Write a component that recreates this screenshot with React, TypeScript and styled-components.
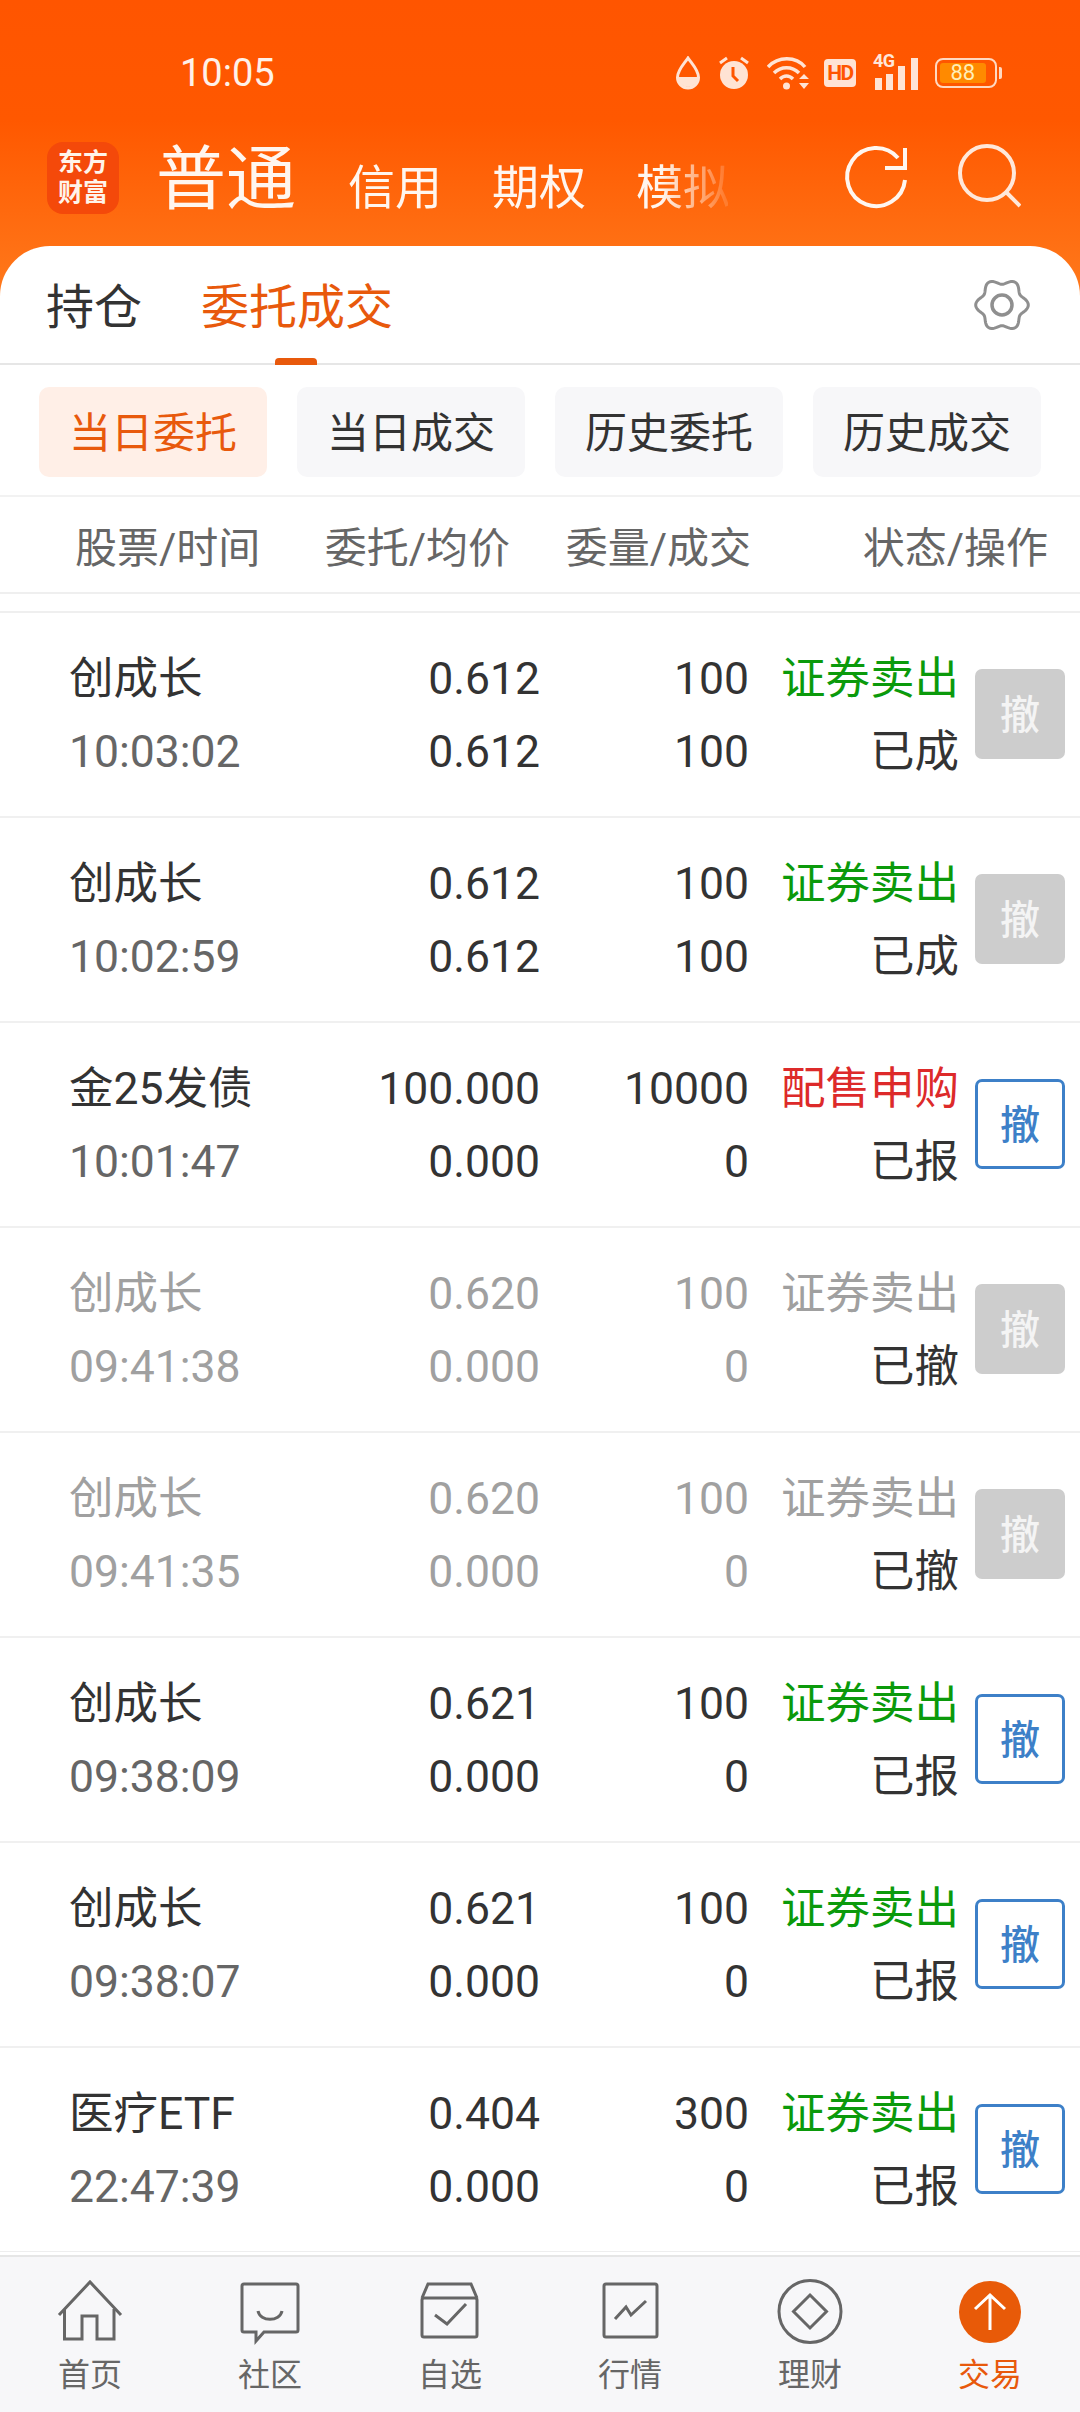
import React from "react";
import styled, { createGlobalStyle } from "styled-components";

const GlobalStyle = createGlobalStyle`
  html, body {
    margin: 0;
    padding: 0;
    background: #fff;
  }
  * {
    box-sizing: border-box;
  }
`;

const Shell = styled.div`
  width: 1080px;
  height: 2412px;
  display: flex;
  flex-direction: column;
  overflow: hidden;
  font-family: Roboto, "Noto Sans CJK SC", sans-serif;
  color: #333;
  background: linear-gradient(#ff5500 0, #ff5800 120px, #ff7a1c 300px) no-repeat;
  background-size: 100% 300px;
`;

/* status bar */
const StatusBar = styled.div`
  height: 130px;
  flex: none;
  padding: 16px 78px 0 180px;
  display: flex;
  align-items: center;
  justify-content: space-between;
  color: #ffe6d9;
`;

const Clock = styled.span`
  font-size: 38px;
  line-height: 1;
  color: #fff1e8;
`;

const StatusIcons = styled.div`
  display: flex;
  align-items: center;
  gap: 17px;
`;

const HdBadge = styled.span`
  width: 32px;
  height: 28px;
  margin-left: -4px;
  border-radius: 4px;
  background: #ffe3d4;
  color: #ff5500;
  font-size: 21px;
  font-weight: 700;
  line-height: 28px;
  text-align: center;
  letter-spacing: -1.5px;
`;

const Signal = styled.div`
  display: flex;
  width: 45px;
  height: 34px;
  position: relative;
  align-items: flex-end;
`;

const SignalLabel = styled.span`
  position: absolute;
  left: 0;
  top: -5px;
  font-size: 18px;
  font-weight: 700;
  line-height: 20px;
  letter-spacing: -0.5px;
`;

const SignalBars = styled.svg`
  display: block;
`;

const Battery = styled.div`
  display: flex;
  align-items: center;
  gap: 2px;
`;

const BatteryBody = styled.div`
  width: 62px;
  height: 30px;
  border: 2px solid #ffd9c2;
  border-radius: 8px;
  padding: 3px;
`;

const BatteryLevel = styled.div`
  width: 88%;
  height: 100%;
  background: #ff8a00;
  border-radius: 3px;
  color: #ffeeb8;
  font-size: 22px;
  line-height: 20px;
  text-align: center;
`;

const BatteryTip = styled.div`
  width: 3px;
  height: 12px;
  background: #ffd9c2;
  border-radius: 0 2px 2px 0;
`;

/* account type bar */
const TopBar = styled.div`
  height: 116px;
  flex: none;
  padding: 12px 59px 0 47px;
  display: flex;
  align-items: flex-start;
`;

const Logo = styled.div`
  width: 72px;
  height: 72px;
  flex: none;
  border-radius: 16px;
  background: #f4490a;
  color: #fff4ea;
  font-size: 25px;
  font-weight: 700;
  line-height: 30px;
  padding-top: 6px;
  text-align: center;
`;

const AccountTabs = styled.div`
  margin-left: 37px;
  margin-top: -3px;
  width: 572px;
  display: flex;
  align-items: baseline;
  color: #fff6ef;
  -webkit-mask-image: linear-gradient(to right, #000 505px, rgba(0, 0, 0, 0.15) 570px);
  mask-image: linear-gradient(to right, #000 505px, rgba(0, 0, 0, 0.15) 570px);
`;

const AccountTab = styled.span<{ $active?: boolean }>`
  font-size: ${(p) => (p.$active ? 70 : 47)}px;
  line-height: 82px;
  margin-right: ${(p) => (p.$active ? 52 : 50)}px;
  white-space: nowrap;
`;

const BarActions = styled.div`
  margin-left: auto;
  margin-top: 1px;
  display: flex;
  gap: 45px;
`;

/* white panel */
const Panel = styled.div`
  flex: 1;
  min-height: 0;
  display: flex;
  flex-direction: column;
  background: #fff;
  border-radius: 50px 50px 0 0;
`;

const PanelHead = styled.div`
  height: 119px;
  flex: none;
  padding: 0 50px 0 46px;
  display: flex;
  align-items: center;
  border-bottom: 2px solid #e6e6e6;
`;

const PanelTab = styled.div<{ $active?: boolean }>`
  position: relative;
  height: 117px;
  padding-top: 6px;
  font-size: 48px;
  line-height: 111px;
  margin-right: 59px;
  color: ${(p) => (p.$active ? "#e8590c" : "#333")};
  ${(p) =>
    p.$active &&
    `
    &::after {
      content: "";
      position: absolute;
      left: 74px;
      bottom: -2px;
      width: 42px;
      height: 7px;
      border-radius: 4px 4px 0 0;
      background: #e8590c;
    }
  `}
`;

const GearButton = styled.div`
  margin-left: auto;
  display: flex;
`;

const Filters = styled.div`
  height: 132px;
  flex: none;
  padding: 22px 0 0 39px;
  display: flex;
  gap: 30px;
  align-items: flex-start;
  border-bottom: 2px solid #f2f2f2;
`;

const Filter = styled.div<{ $active?: boolean }>`
  width: 228px;
  height: 90px;
  border-radius: 10px;
  text-align: center;
  font-size: 42px;
  line-height: 94px;
  color: ${(p) => (p.$active ? "#e8590c" : "#333")};
  background: ${(p) => (p.$active ? "#ffefe7" : "#f7f7f9")};
`;

const Columns = styled.div`
  height: 97px;
  flex: none;
  display: flex;
  align-items: center;
  padding: 0 32px 0 75px;
  font-size: 42px;
  color: #666;
  border-bottom: 2px solid #efefef;
`;

const ColumnLabel = styled.span<{ $width: number }>`
  width: ${(p) => p.$width}px;
  text-align: right;
  white-space: nowrap;
  &:first-child {
    text-align: left;
  }
`;

const OrderList = styled.div`
  margin-top: 17px;
  flex: 1;
  min-height: 0;
  border-top: 2px solid #efefef;
`;

const OrderRow = styled.div`
  height: 205px;
  padding: 3px 15px 0 69px;
  display: flex;
  align-items: center;
  border-bottom: 2px solid #f0f0f0;
  font-size: 44.5px;
  line-height: 73px;
`;

const Cell = styled.div<{ $width: number; $left?: boolean; $faded?: boolean }>`
  width: ${(p) => p.$width}px;
  flex: none;
  white-space: nowrap;
  text-align: ${(p) => (p.$left ? "left" : "right")};
  color: ${(p) => (p.$faded ? "#a0a0a0" : "#333")};
`;

const Time = styled.div<{ $faded?: boolean }>`
  color: ${(p) => (p.$faded ? "#a0a0a0" : "#666")};
`;

const Side = styled.div<{ $tone: "sell" | "buy" | "off" }>`
  color: ${(p) =>
    p.$tone === "sell" ? "#0b9a0b" : p.$tone === "buy" ? "#dd2a2a" : "#a0a0a0"};
`;

const CancelButton = styled.div<{ $live?: boolean }>`
  width: 90px;
  height: 90px;
  margin: -5px 0 0 16px;
  flex: none;
  border-radius: 7px;
  text-align: center;
  font-size: 40px;
  font-weight: 500;
  line-height: ${(p) => (p.$live ? 88 : 94)}px;
  color: ${(p) => (p.$live ? "#3d80c8" : "#f4f4f4")};
  background: ${(p) => (p.$live ? "#fff" : "#cdcdcd")};
  border: ${(p) => (p.$live ? "3px solid #3d80c8" : "none")};
`;

/* bottom navigation */
const TabBar = styled.div`
  height: 157px;
  flex: none;
  display: grid;
  grid-template-columns: repeat(6, 180px);
  background: #f7f7f9;
  border-top: 2px solid #e6e6e6;
  box-shadow: 0 -3px 0 #fff, 0 -4px 0 #eeeeee;
`;

const TabItem = styled.div<{ $active?: boolean }>`
  display: flex;
  flex-direction: column;
  align-items: center;
  padding-top: 20px;
  font-size: 32px;
  line-height: 40px;
  color: ${(p) => (p.$active ? "#e8590c" : "#666")};
`;

const TabLabel = styled.span`
  margin-top: 8px;
`;

type Order = {
  name: string;
  time: string;
  price: string;
  average: string;
  qty: string;
  filled: string;
  side: string;
  state: string;
  tone: "sell" | "buy" | "off";
  live?: boolean;
};

const orders: Order[] = [
  { name: "创成长", time: "10:03:02", price: "0.612", average: "0.612", qty: "100", filled: "100", side: "证券卖出", state: "已成", tone: "sell" },
  { name: "创成长", time: "10:02:59", price: "0.612", average: "0.612", qty: "100", filled: "100", side: "证券卖出", state: "已成", tone: "sell" },
  { name: "金25发债", time: "10:01:47", price: "100.000", average: "0.000", qty: "10000", filled: "0", side: "配售申购", state: "已报", tone: "buy", live: true },
  { name: "创成长", time: "09:41:38", price: "0.620", average: "0.000", qty: "100", filled: "0", side: "证券卖出", state: "已撤", tone: "off" },
  { name: "创成长", time: "09:41:35", price: "0.620", average: "0.000", qty: "100", filled: "0", side: "证券卖出", state: "已撤", tone: "off" },
  { name: "创成长", time: "09:38:09", price: "0.621", average: "0.000", qty: "100", filled: "0", side: "证券卖出", state: "已报", tone: "sell", live: true },
  { name: "创成长", time: "09:38:07", price: "0.621", average: "0.000", qty: "100", filled: "0", side: "证券卖出", state: "已报", tone: "sell", live: true },
  { name: "医疗ETF", time: "22:47:39", price: "0.404", average: "0.000", qty: "300", filled: "0", side: "证券卖出", state: "已报", tone: "sell", live: true },
];

// six soft lobes around the centre of a 56 box
const gearPath = (() => {
  const pts: string[] = [];
  for (let i = 0; i < 120; i++) {
    const a = (i / 120) * Math.PI * 2;
    const r = 23.5 + 2.8 * Math.cos(6 * a);
    pts.push(`${(28 + r * Math.cos(a)).toFixed(2)} ${(28 + r * Math.sin(a)).toFixed(2)}`);
  }
  return `M${pts.join("L")}Z`;
})();

const DropIcon = () => (
  <svg width="26" height="34" viewBox="0 0 26 34">
    <path d="M13 2C9 8 2.5 14 2.5 21.5a10.5 10.5 0 0 0 21 0C23.5 14 17 8 13 2Z" fill="none" stroke="#ffe3d4" strokeWidth="3" />
    <path d="M3 21h20a10 10 0 0 1-20 0Z" fill="#ffe3d4" />
  </svg>
);

const AlarmIcon = () => (
  <svg width="32" height="34" viewBox="0 0 32 34">
    <circle cx="16" cy="19" r="14" fill="#ffe3d4" />
    <path d="M15 11v9l5 5" fill="none" stroke="#ff5500" strokeWidth="3" />
    <path d="M2 7l7-5M30 7l-7-5" stroke="#ffe3d4" strokeWidth="3" />
  </svg>
);

const WifiIcon = () => (
  <svg width="44" height="34" viewBox="0 0 44 34">
    <g fill="none" stroke="#ffe3d4" strokeWidth="3.5">
      <path d="M1 11C11 0 29 0 38 11" />
      <path d="M7 17c7-7 18-7 25 0" />
      <path d="M13 23c4-4 9-4 13 0" />
    </g>
    <circle cx="19.5" cy="30" r="3.5" fill="#ffe3d4" />
    <path d="M32 23h10l-5-5ZM32 27h10l-5 6Z" fill="#ffe3d4" />
  </svg>
);

const RefreshIcon = () => (
  <svg width="70" height="70" viewBox="0 0 70 70" fill="none" stroke="#fff6ef" strokeWidth="4">
    <path d="M65 37A29 29 0 1 1 58 15" />
    <path d="M65 5V25H45" />
  </svg>
);

const SearchIcon = () => (
  <svg width="66" height="70" viewBox="0 0 66 70" fill="none" stroke="#ffe8da" strokeWidth="4">
    <circle cx="32" cy="30" r="27" />
    <path d="M51 49L65 63" />
  </svg>
);

const GearIcon = () => (
  <svg width="56" height="56" viewBox="0 0 56 56" fill="none" stroke="#8f8f8f" strokeWidth="3">
    <path d={gearPath} />
    <circle cx="28" cy="28" r="10" strokeWidth="3.5" />
  </svg>
);

const NavIcon = ({ children }: { children: React.ReactNode }) => (
  <svg width="70" height="70" viewBox="0 0 70 70" fill="none" stroke="#666" strokeWidth="3">
    {children}
  </svg>
);

const navItems: { label: string; icon: React.ReactNode; active?: boolean }[] = [
  {
    label: "首页",
    icon: (
      <NavIcon>
        <path d="M4 38L35 5L66 38" />
        <path d="M9.5 32V62H27V39H42V62H59V32" />
      </NavIcon>
    ),
  },
  {
    label: "社区",
    icon: (
      <NavIcon>
        <path d="M9 7H61Q63 7 63 9V53Q63 55 61 55H29L21 64V55H9Q7 55 7 53V9Q7 7 9 7Z" />
        <path d="M23 34C25 45 45 45 47 34" />
      </NavIcon>
    ),
  },
  {
    label: "自选",
    icon: (
      <NavIcon>
        <path d="M7 21L13 7H56L62 21" />
        <rect x="7" y="21" width="55" height="39" rx="2" />
        <path d="M20 38L32 47L51 27" />
      </NavIcon>
    ),
  },
  {
    label: "行情",
    icon: (
      <NavIcon>
        <rect x="9" y="7" width="53" height="53" rx="2" />
        <path d="M20 42L31 30L36 38L51 24" />
      </NavIcon>
    ),
  },
  {
    label: "理财",
    icon: (
      <NavIcon>
        <circle cx="35" cy="34.5" r="31" />
        <path d="M35 18L51.5 34.5L35 51L18.5 34.5Z" />
      </NavIcon>
    ),
  },
  {
    label: "交易",
    active: true,
    icon: (
      <svg width="70" height="70" viewBox="0 0 70 70" fill="none">
        <circle cx="35" cy="35" r="31" fill="#e85a08" />
        <path d="M35 18V53M20 32L35 18L50 32" stroke="#fff" strokeWidth="3" />
      </svg>
    ),
  },
];

export default function App() {
  return (
    <Shell>
      <GlobalStyle />
      <StatusBar>
        <Clock>10:05</Clock>
        <StatusIcons>
          <DropIcon />
          <AlarmIcon />
          <WifiIcon />
          <HdBadge>HD</HdBadge>
          <Signal>
            <SignalLabel>4G</SignalLabel>
            <SignalBars width="45" height="34" viewBox="0 0 45 34" fill="#ffe3d4">
              <rect x="2" y="22" width="7" height="12" />
              <rect x="13" y="18" width="7" height="16" />
              <rect x="25" y="10" width="7" height="24" />
              <rect x="38" y="2" width="7" height="32" />
            </SignalBars>
          </Signal>
          <Battery>
            <BatteryBody>
              <BatteryLevel>88</BatteryLevel>
            </BatteryBody>
            <BatteryTip />
          </Battery>
        </StatusIcons>
      </StatusBar>

      <TopBar>
        <Logo>
          东方
          <br />
          财富
        </Logo>
        <AccountTabs>
          <AccountTab $active>普通</AccountTab>
          <AccountTab>信用</AccountTab>
          <AccountTab>期权</AccountTab>
          <AccountTab>模拟</AccountTab>
        </AccountTabs>
        <BarActions>
          <RefreshIcon />
          <SearchIcon />
        </BarActions>
      </TopBar>

      <Panel>
        <PanelHead>
          <PanelTab>持仓</PanelTab>
          <PanelTab $active>委托成交</PanelTab>
          <GearButton>
            <GearIcon />
          </GearButton>
        </PanelHead>

        <Filters>
          <Filter $active>当日委托</Filter>
          <Filter>当日成交</Filter>
          <Filter>历史委托</Filter>
          <Filter>历史成交</Filter>
        </Filters>

        <Columns>
          <ColumnLabel $width={183}>股票/时间</ColumnLabel>
          <ColumnLabel $width={252}>委托/均价</ColumnLabel>
          <ColumnLabel $width={241}>委量/成交</ColumnLabel>
          <ColumnLabel $width={297}>状态/操作</ColumnLabel>
        </Columns>

        <OrderList>
          {orders.map((o) => (
            <OrderRow key={o.time}>
              <Cell $width={270} $left $faded={o.tone === "off"}>
                <div>{o.name}</div>
                <Time $faded={o.tone === "off"}>{o.time}</Time>
              </Cell>
              <Cell $width={201} $faded={o.tone === "off"}>
                <div>{o.price}</div>
                <div>{o.average}</div>
              </Cell>
              <Cell $width={209} $faded={o.tone === "off"}>
                <div>{o.qty}</div>
                <div>{o.filled}</div>
              </Cell>
              <Cell $width={210}>
                <Side $tone={o.tone}>{o.side}</Side>
                <div>{o.state}</div>
              </Cell>
              <CancelButton $live={o.live}>撤</CancelButton>
            </OrderRow>
          ))}
        </OrderList>

        <TabBar>
          {navItems.map((item) => (
            <TabItem key={item.label} $active={item.active}>
              {item.icon}
              <TabLabel>{item.label}</TabLabel>
            </TabItem>
          ))}
        </TabBar>
      </Panel>
    </Shell>
  );
}
